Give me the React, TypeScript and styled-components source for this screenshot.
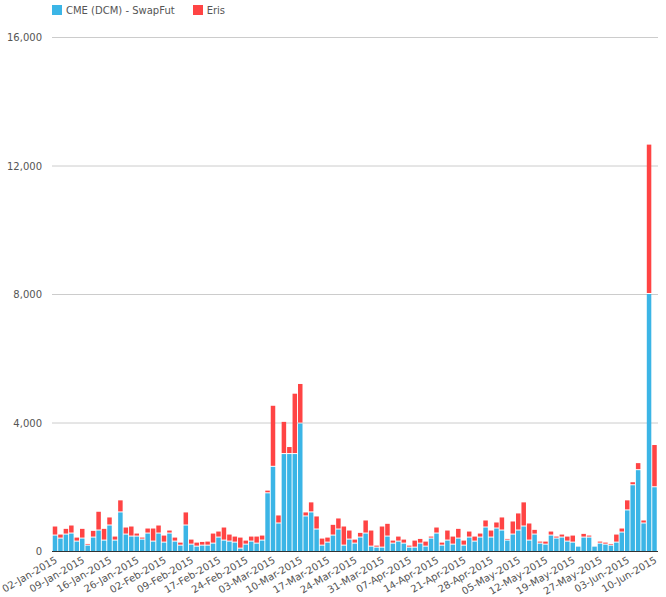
import React from "react";
import styled, { createGlobalStyle } from "styled-components";

const Global = createGlobalStyle`
  html, body { margin: 0; padding: 0; background: #fff; }
  body { font-family: "DejaVu Sans", Verdana, sans-serif; }
`;

const Page = styled.div`
  width: 666px;
  height: 597px;
  position: relative;
`;

const Legend = styled.div`
  display: flex;
  align-items: center;
  gap: 18px;
  padding: 3px 0 0 52px;
  height: 14px;
  font-size: 10px;
  color: #555;
`;

const LegendItem = styled.div`
  display: flex;
  align-items: center;
  gap: 4px;
`;

const Swatch = styled.span<{ $c: string }>`
  width: 10px;
  height: 10px;
  background: ${(p) => p.$c};
  display: inline-block;
`;

const Chart = styled.svg`
  display: block;
  position: absolute;
  left: 0;
  top: 0;
`;

const BLUE = "#3bb5e6";
const RED = "#ff4444";

// pairs of [blueTop, totalTop] in zoom units (baseline 513)
const raw: [number, number][] = [
  [467,440],[476,464],[464,447],[461,437],[485,473],[476,447],[497,492],[473,453],[452,396],[482,447],
  [437,413],[482,470],[398,362],[464,443],[470,440],[470,461],[479,473],[461,446],[485,446],[461,437],
  [488,467],[461,452],[485,473],[497,488],[437,398],[494,479],[500,488],[497,486],[497,485],[491,461],
  [473,455],[482,443],[485,464],[488,470],[506,473],[494,482],[485,470],[491,470],[482,467],[341,333],
  [262,80],[431,407],[224,128],[224,203],[224,44],[133,15],[410,398],[398,368],[449,410],[497,476],
  [488,473],[467,435],[449,416],[497,440],[479,452],[491,479],[473,459],[461,422],[500,452],[503,497],
  [503,440],[470,432],[491,482],[485,470],[491,479],[503,497],[503,482],[491,477],[500,485],[476,470],
  [461,443],[497,488],[482,452],[494,470],[476,447],[497,482],[473,455],[485,470],[473,461],[443,422],
  [473,452],[446,428],[452,413],[482,477],[464,425],[452,401],[440,368],[482,431],[464,450],[491,485],
  [494,485],[467,455],[476,470],[473,464],[485,470],[488,467],[500,497],[473,462],[473,467],[500,497],
  [491,485],[494,488],[497,492],[488,464],[458,446],[392,362],[317,308],[272,251],[431,422],[-999,-999],
  [323,197],
];
const data = raw.map(([b, t], i) => {
  if (i === 109) return { blue: 8000, total: 12650 };
  return { blue: (513 - b) * 10.44, total: (513 - t) * 10.44 };
});

const BASE = 551;
const TOPY = 37;
const X0 = 52;
const X1 = 658;
const yOf = (v: number) => BASE - (v / 16000) * (BASE - TOPY);
const PITCH = 5.45;
const BW = 4.5;
const cx = (i: number) => 55 + i * PITCH;

const labels = [
  "02-Jan-2015","09-Jan-2015","16-Jan-2015","26-Jan-2015","02-Feb-2015","09-Feb-2015","17-Feb-2015",
  "24-Feb-2015","03-Mar-2015","10-Mar-2015","17-Mar-2015","24-Mar-2015","31-Mar-2015","07-Apr-2015",
  "14-Apr-2015","21-Apr-2015","28-Apr-2015","05-May-2015","12-May-2015","19-May-2015","27-May-2015",
  "03-Jun-2015","10-Jun-2015",
];

export default function App() {
  return (
    <Page>
      <Global />
      <Chart width={666} height={597}>
        {[0, 4000, 8000, 12000, 16000].map((v) => (
          <g key={v}>
            {v > 0 && <line x1={X0} x2={X1} y1={yOf(v) + 0.5} y2={yOf(v) + 0.5} stroke="#ccc" />}
            <text x={42} y={yOf(v) + 4} textAnchor="end" fontSize={10} fill="#555"
              fontFamily="DejaVu Sans, sans-serif">
              {v.toLocaleString("en-US")}
            </text>
          </g>
        ))}
        {data.map((d, i) => {
          const x = cx(i) - BW / 2;
          const by = yOf(d.blue);
          const ty = yOf(d.total);
          return (
            <g key={i}>
              <rect x={x} y={by} width={BW} height={BASE - by} fill={BLUE} />
              {by - ty > 1.5 && <rect x={x} y={ty} width={BW} height={by - ty - 1} fill={RED} />}
            </g>
          );
        })}
        <line x1={X0} x2={X1} y1={BASE + 0.5} y2={BASE + 0.5} stroke="#333" />
        {labels.map((l, k) => {
          const x = cx(k * 5) + 3;
          return (
            <text key={l} x={x} y={562} textAnchor="end" fontSize={10} fill="#555"
              fontFamily="DejaVu Sans, sans-serif" transform={`rotate(-30 ${x} 562)`}>
              {l}
            </text>
          );
        })}
      </Chart>
      <Legend>
        <LegendItem><Swatch $c={BLUE} />CME (DCM) - SwapFut</LegendItem>
        <LegendItem><Swatch $c={RED} />Eris</LegendItem>
      </Legend>
    </Page>
  );
}
